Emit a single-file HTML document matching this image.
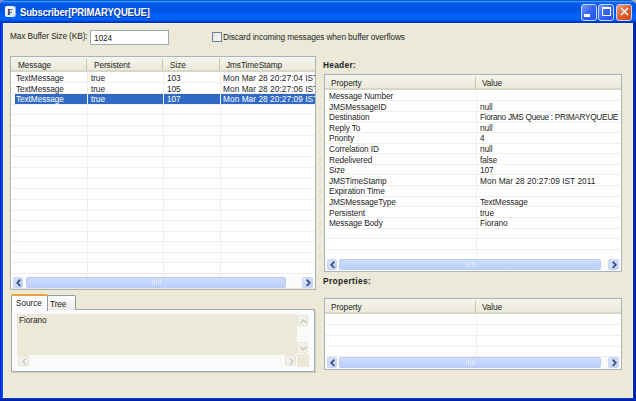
<!DOCTYPE html>
<html><head><meta charset="utf-8">
<style>
*{margin:0;padding:0;box-sizing:border-box}
html,body{width:636px;height:401px;overflow:hidden;background:#0A3ED8}
body{position:relative;font-family:"Liberation Sans",sans-serif;font-size:8px;color:#1E1E1E}
.a{position:absolute}
.t{position:absolute;white-space:nowrap;line-height:10px;font-size:8.3px;letter-spacing:-0.1px}
#frame{left:0;top:0;width:636px;height:401px;border-radius:6px 6px 0 0;
 background:linear-gradient(90deg,#0018C8 0px,#0A3EE0 1px,#0848EC 2px,#0848EC 3px,transparent 3px,transparent 633px,#0838C4 633px,#0028B0 634px,#001AA0 635px)}
#fbot{left:0;top:398px;width:636px;height:3px;background:linear-gradient(#0838C8,#0028B0 66%,#001CA0)}
#title{left:0;top:0;width:636px;height:23px;border-radius:6px 6px 0 0;
 background:linear-gradient(#0A5CD0 0px,#0A5CD0 1px,#3C92FF 1px,#3C92FF 2px,#1876F6 2px,#0E66F0 3px,#0058E8 4px,#0054E4 8px,#0056E8 12px,#0062F6 15px,#0062F6 20px,#0046D8 21px,#0034BC 22px,#0030B4 23px)}
#body{left:3px;top:23px;width:630px;height:375px;background:#ECE9D8;border:1px solid #EEF3F8}
.tb{position:absolute;top:4px;width:16px;height:17px;border:1px solid #C4D8FA;border-radius:3px;background:linear-gradient(135deg,#7A96FA,#3A66F2 45%,#1E50EC)}
.tbx{background:linear-gradient(135deg,#F29A7A,#E2602E 50%,#D0481C)}
.tbl{border:1px solid #A9B3BA;background:#fff}
.tblb{border:1px solid #A9B3BA}
.hdr{background:linear-gradient(#F6F5EE,#EBEADB);border-bottom:2px solid #D8D6C5}
.hd{width:1px;background:#C7C5B2}
.gl{background:#F1EFE8}
.sel{background:#316AC5}
.trk{background:#FBFBF9}
.thumb{border-radius:2px;background:linear-gradient(#D0DEFD,#C3D5FC 50%,#BCD0FB);border:1px solid #B9CCF5}
.grip{width:9px;height:5px;background:repeating-linear-gradient(90deg,#DDE7FE 0 1px,transparent 1px 2px)}
.arr{border-radius:2px;background:linear-gradient(135deg,#D8E3FC,#C0D2F8);border:1px solid #C9D7F7}
.darr{border-radius:2px;background:#F2F1EA;border:1px solid #E5E3D8}
.panel{border:1px solid #A2AAAC;background:#FCFCFE;box-shadow:1px 1px 0 #D0CEBF}
.tab{border:1px solid #919B9C;border-bottom:none;border-radius:2px 2px 0 0;background:linear-gradient(#FFFFFF,#ECEBE5)}
.tabsel{border:1px solid #919B9C;border-bottom:none;border-top:2px solid #EFA238;border-radius:2px 2px 0 0;background:#FCFCFE}
</style></head><body>
<div class="a" style="left:0;top:0;width:6px;height:6px;background:#8088D8"></div><div class="a" style="left:630px;top:0;width:6px;height:6px;background:#B4B2A8"></div>
<div id="frame" class="a"></div><div id="fbot" class="a"></div>
<div id="title" class="a"></div>
<div class="a" style="left:5px;top:6px;width:10px;height:11px;background:linear-gradient(135deg,#FFFFFF,#DDE6F2);border-radius:2px;box-shadow:1px 0 0 #8FB4EC"></div>
<div class="t" style="left:6px;top:7px;width:8px;font-family:'Liberation Serif';font-weight:bold;font-size:9px;color:#1A2A40;text-align:center">F</div>
<div class="t" style="left:20px;top:5px;font-weight:bold;font-size:10.8px;letter-spacing:-0.2px;transform:scaleX(0.885);transform-origin:0 0;color:#fff;text-shadow:1px 1px 0 #0A2A9A;line-height:14px">Subscriber[PRIMARYQUEUE]</div>
<div class="tb" style="left:581px"><div class="a" style="left:2px;top:9px;width:6px;height:3px;background:#fff"></div></div>
<div class="tb" style="left:598px"><div class="a" style="left:3px;top:2px;width:9px;height:9px;border:1px solid #fff;border-top-width:2px"></div></div>
<div class="tb tbx" style="left:616px"><svg class="a" style="left:3px;top:2px" width="9" height="9"><path d="M1 1L8 8M8 1L1 8" stroke="#fff" stroke-width="1.6"/></svg></div>
<div id="body" class="a"></div>
<div class="t" style="left:10px;top:31px">Max Buffer Size (KB):</div>
<div class="a" style="left:90px;top:30px;width:79px;height:15px;border:1px solid #9CAAB8;background:#fff"></div>
<div class="t" style="left:94px;top:33px">1024</div>
<div class="a" style="left:212px;top:32px;width:10px;height:10px;border:1px solid #6F8396;background:linear-gradient(135deg,#E2E2DD,#FAFAFA)"></div>
<div class="t" style="left:223px;top:32px">Discard incoming messages when buffer overflows</div>
<div class="a" style="left:11px;top:57px;width:304px;height:231px;overflow:hidden">
<div class="a" style="left:-11px;top:-57px;width:636px;height:401px">
<div class="a tbl" style="left:10px;top:56px;width:306px;height:234px"></div>
<div class="a hdr" style="left:11px;top:57px;width:304px;height:15px"></div>
<div class="a hd" style="left:86px;top:59px;height:11px"></div>
<div class="a hd" style="left:162px;top:59px;height:11px"></div>
<div class="a hd" style="left:219px;top:59px;height:11px"></div>
<div class="t" style="left:18px;top:60px;">Message</div>
<div class="t" style="left:94px;top:60px;">Persistent</div>
<div class="t" style="left:170px;top:60px;">Size</div>
<div class="t" style="left:226px;top:60px;">JmsTimeStamp</div>
<div class="a gl" style="left:87px;top:72px;width:1px;height:205px"></div>
<div class="a gl" style="left:163px;top:72px;width:1px;height:205px"></div>
<div class="a gl" style="left:220px;top:72px;width:1px;height:205px"></div>
<div class="a gl" style="left:11px;top:82px;width:304px;height:1px"></div>
<div class="a gl" style="left:11px;top:93px;width:304px;height:1px"></div>
<div class="a gl" style="left:11px;top:104px;width:304px;height:1px"></div>
<div class="a gl" style="left:11px;top:114px;width:304px;height:1px"></div>
<div class="a gl" style="left:11px;top:125px;width:304px;height:1px"></div>
<div class="a gl" style="left:11px;top:135px;width:304px;height:1px"></div>
<div class="a gl" style="left:11px;top:146px;width:304px;height:1px"></div>
<div class="a gl" style="left:11px;top:156px;width:304px;height:1px"></div>
<div class="a gl" style="left:11px;top:167px;width:304px;height:1px"></div>
<div class="a gl" style="left:11px;top:178px;width:304px;height:1px"></div>
<div class="a gl" style="left:11px;top:188px;width:304px;height:1px"></div>
<div class="a gl" style="left:11px;top:199px;width:304px;height:1px"></div>
<div class="a gl" style="left:11px;top:210px;width:304px;height:1px"></div>
<div class="a gl" style="left:11px;top:220px;width:304px;height:1px"></div>
<div class="a gl" style="left:11px;top:231px;width:304px;height:1px"></div>
<div class="a gl" style="left:11px;top:241px;width:304px;height:1px"></div>
<div class="a gl" style="left:11px;top:252px;width:304px;height:1px"></div>
<div class="a gl" style="left:11px;top:262px;width:304px;height:1px"></div>
<div class="a gl" style="left:11px;top:273px;width:304px;height:1px"></div>
<div class="t" style="left:16px;top:73px;">TextMessage</div>
<div class="t" style="left:91px;top:73px;">true</div>
<div class="t" style="left:167px;top:73px;">103</div>
<div class="t" style="left:223px;top:73px;letter-spacing:0.05px">Mon Mar 28 20:27:04 IST 2011</div>
<div class="t" style="left:16px;top:84px;">TextMessage</div>
<div class="t" style="left:91px;top:84px;">true</div>
<div class="t" style="left:167px;top:84px;">105</div>
<div class="t" style="left:223px;top:84px;letter-spacing:0.05px">Mon Mar 28 20:27:06 IST 2011</div>
<div class="a sel" style="left:15px;top:94px;width:72px;height:10px"></div>
<div class="a sel" style="left:88px;top:94px;width:75px;height:10px"></div>
<div class="a sel" style="left:164px;top:94px;width:56px;height:10px"></div>
<div class="a sel" style="left:221px;top:94px;width:94px;height:10px"></div>
<div class="t" style="left:16px;top:94px;color:#fff;">TextMessage</div>
<div class="t" style="left:91px;top:94px;color:#fff;">true</div>
<div class="t" style="left:167px;top:94px;color:#fff;">107</div>
<div class="t" style="left:223px;top:94px;color:#fff;letter-spacing:0.05px">Mon Mar 28 20:27:09 IST 2011</div>
<div class="a trk" style="left:11px;top:277px;width:304px;height:12px"></div>
<div class="a arr" style="left:13px;top:277px;width:10px;height:11px"><svg class="a" style="left:1px;top:0px" width="8" height="10"><path d="M5.3 1.6L2.3 4.8L5.3 8" stroke="#3A4F7E" stroke-width="1.8" fill="none"/></svg></div>
<div class="a thumb" style="left:26px;top:277px;width:260px;height:11px"><div class="a grip" style="left:125px;top:2px"></div></div>
<div class="a arr" style="left:302px;top:277px;width:11px;height:11px"><svg class="a" style="left:1px;top:0px" width="8" height="10"><path d="M2.7 1.6L5.7 4.8L2.7 8" stroke="#3A4F7E" stroke-width="1.8" fill="none"/></svg></div>
</div></div>
<div class="a tblb" style="left:10px;top:56px;width:306px;height:234px"></div>
<div class="a panel" style="left:11px;top:309px;width:304px;height:63px"></div>
<div class="a tab" style="left:47px;top:295px;width:29px;height:15px"></div>
<div class="a tabsel" style="left:11px;top:294px;width:37px;height:17px"></div>
<div class="t" style="left:16px;top:298px;font-size:8.3px">Source</div>
<div class="t" style="left:50px;top:299px;font-size:8.3px">Tree</div>
<div class="a" style="left:17px;top:314px;width:292px;height:53px;background:#ECE9D8"></div>
<div class="t" style="left:19px;top:315px;">Fiorano</div>
<div class="a" style="left:297px;top:314px;width:12px;height:40px;background:#FAFAF8"></div>
<div class="a darr" style="left:297px;top:315px;width:11px;height:11px"><svg class="a" style="left:2px;top:3px" width="7" height="5"><path d="M0.5 4L3.5 1L6.5 4" stroke="#C9C7BA" stroke-width="1.4" fill="none"/></svg></div>
<div class="a darr" style="left:297px;top:342px;width:11px;height:11px"><svg class="a" style="left:2px;top:3px" width="7" height="5"><path d="M0.5 1L3.5 4L6.5 1" stroke="#C9C7BA" stroke-width="1.4" fill="none"/></svg></div>
<div class="a" style="left:17px;top:355px;width:280px;height:12px;background:#FAFAF8"></div>
<div class="a darr" style="left:18px;top:355px;width:11px;height:11px"><svg class="a" style="left:3px;top:2px" width="5" height="7"><path d="M4 0.5L1 3.5L4 6.5" stroke="#C9C7BA" stroke-width="1.4" fill="none"/></svg></div>
<div class="a darr" style="left:285px;top:355px;width:11px;height:11px"><svg class="a" style="left:3px;top:2px" width="5" height="7"><path d="M1 0.5L4 3.5L1 6.5" stroke="#C9C7BA" stroke-width="1.4" fill="none"/></svg></div>
<div class="t" style="left:323px;top:60px;font-weight:bold;font-size:8.3px;letter-spacing:0.3px">Header:</div>
<div class="a tbl" style="left:324px;top:74px;width:298px;height:198px"></div>
<div class="a hdr" style="left:325px;top:75px;width:296px;height:15px"></div>
<div class="a hd" style="left:475px;top:77px;height:11px"></div>
<div class="t" style="left:331px;top:78px;">Property</div>
<div class="t" style="left:482px;top:78px;">Value</div>
<div class="a gl" style="left:476px;top:90px;width:1px;height:169px"></div>
<div class="a gl" style="left:325px;top:100px;width:296px;height:1px"></div>
<div class="a gl" style="left:325px;top:111px;width:296px;height:1px"></div>
<div class="a gl" style="left:325px;top:122px;width:296px;height:1px"></div>
<div class="a gl" style="left:325px;top:132px;width:296px;height:1px"></div>
<div class="a gl" style="left:325px;top:143px;width:296px;height:1px"></div>
<div class="a gl" style="left:325px;top:153px;width:296px;height:1px"></div>
<div class="a gl" style="left:325px;top:164px;width:296px;height:1px"></div>
<div class="a gl" style="left:325px;top:174px;width:296px;height:1px"></div>
<div class="a gl" style="left:325px;top:185px;width:296px;height:1px"></div>
<div class="a gl" style="left:325px;top:196px;width:296px;height:1px"></div>
<div class="a gl" style="left:325px;top:206px;width:296px;height:1px"></div>
<div class="a gl" style="left:325px;top:217px;width:296px;height:1px"></div>
<div class="a gl" style="left:325px;top:228px;width:296px;height:1px"></div>
<div class="a gl" style="left:325px;top:238px;width:296px;height:1px"></div>
<div class="a gl" style="left:325px;top:249px;width:296px;height:1px"></div>
<div class="t" style="left:329px;top:91px;">Message Number</div>
<div class="t" style="left:329px;top:102px;">JMSMessageID</div>
<div class="t" style="left:480px;top:102px;">null</div>
<div class="t" style="left:329px;top:112px;">Destination</div>
<div class="t" style="left:480px;top:112px;letter-spacing:-0.32px">Fiorano JMS Queue : PRIMARYQUEUE</div>
<div class="t" style="left:329px;top:123px;">Reply To</div>
<div class="t" style="left:480px;top:123px;">null</div>
<div class="t" style="left:329px;top:133px;">Priority</div>
<div class="t" style="left:480px;top:133px;">4</div>
<div class="t" style="left:329px;top:144px;">Correlation ID</div>
<div class="t" style="left:480px;top:144px;">null</div>
<div class="t" style="left:329px;top:155px;">Redelivered</div>
<div class="t" style="left:480px;top:155px;">false</div>
<div class="t" style="left:329px;top:165px;">Size</div>
<div class="t" style="left:480px;top:165px;">107</div>
<div class="t" style="left:329px;top:176px;">JMSTimeStamp</div>
<div class="t" style="left:480px;top:176px;letter-spacing:0.05px">Mon Mar 28 20:27:09 IST 2011</div>
<div class="t" style="left:329px;top:186px;">Expiration Time</div>
<div class="t" style="left:329px;top:197px;">JMSMessageType</div>
<div class="t" style="left:480px;top:197px;">TextMessage</div>
<div class="t" style="left:329px;top:208px;">Persistent</div>
<div class="t" style="left:480px;top:208px;">true</div>
<div class="t" style="left:329px;top:218px;">Message Body</div>
<div class="t" style="left:480px;top:218px;">Fiorano</div>
<div class="a trk" style="left:325px;top:259px;width:296px;height:12px"></div>
<div class="a arr" style="left:327px;top:259px;width:10px;height:11px"><svg class="a" style="left:1px;top:0px" width="8" height="10"><path d="M5.3 1.6L2.3 4.8L5.3 8" stroke="#3A4F7E" stroke-width="1.8" fill="none"/></svg></div>
<div class="a thumb" style="left:339px;top:259px;width:262px;height:11px"><div class="a grip" style="left:126px;top:2px"></div></div>
<div class="a arr" style="left:608px;top:259px;width:11px;height:11px"><svg class="a" style="left:1px;top:0px" width="8" height="10"><path d="M2.7 1.6L5.7 4.8L2.7 8" stroke="#3A4F7E" stroke-width="1.8" fill="none"/></svg></div>
<div class="t" style="left:323px;top:276px;font-weight:bold;font-size:8.4px;letter-spacing:0.35px">Properties:</div>
<div class="a tbl" style="left:324px;top:298px;width:298px;height:72px"></div>
<div class="a hdr" style="left:325px;top:299px;width:296px;height:15px"></div>
<div class="a hd" style="left:475px;top:301px;height:11px"></div>
<div class="t" style="left:331px;top:302px;">Property</div>
<div class="t" style="left:482px;top:302px;">Value</div>
<div class="a gl" style="left:476px;top:314px;width:1px;height:43px"></div>
<div class="a gl" style="left:325px;top:324px;width:296px;height:1px"></div>
<div class="a gl" style="left:325px;top:335px;width:296px;height:1px"></div>
<div class="a gl" style="left:325px;top:346px;width:296px;height:1px"></div>
<div class="a gl" style="left:325px;top:356px;width:296px;height:1px"></div>
<div class="a trk" style="left:325px;top:357px;width:296px;height:12px"></div>
<div class="a arr" style="left:327px;top:357px;width:10px;height:11px"><svg class="a" style="left:1px;top:0px" width="8" height="10"><path d="M5.3 1.6L2.3 4.8L5.3 8" stroke="#3A4F7E" stroke-width="1.8" fill="none"/></svg></div>
<div class="a thumb" style="left:339px;top:357px;width:262px;height:11px"><div class="a grip" style="left:126px;top:2px"></div></div>
<div class="a arr" style="left:608px;top:357px;width:11px;height:11px"><svg class="a" style="left:1px;top:0px" width="8" height="10"><path d="M2.7 1.6L5.7 4.8L2.7 8" stroke="#3A4F7E" stroke-width="1.8" fill="none"/></svg></div>

</body></html>
